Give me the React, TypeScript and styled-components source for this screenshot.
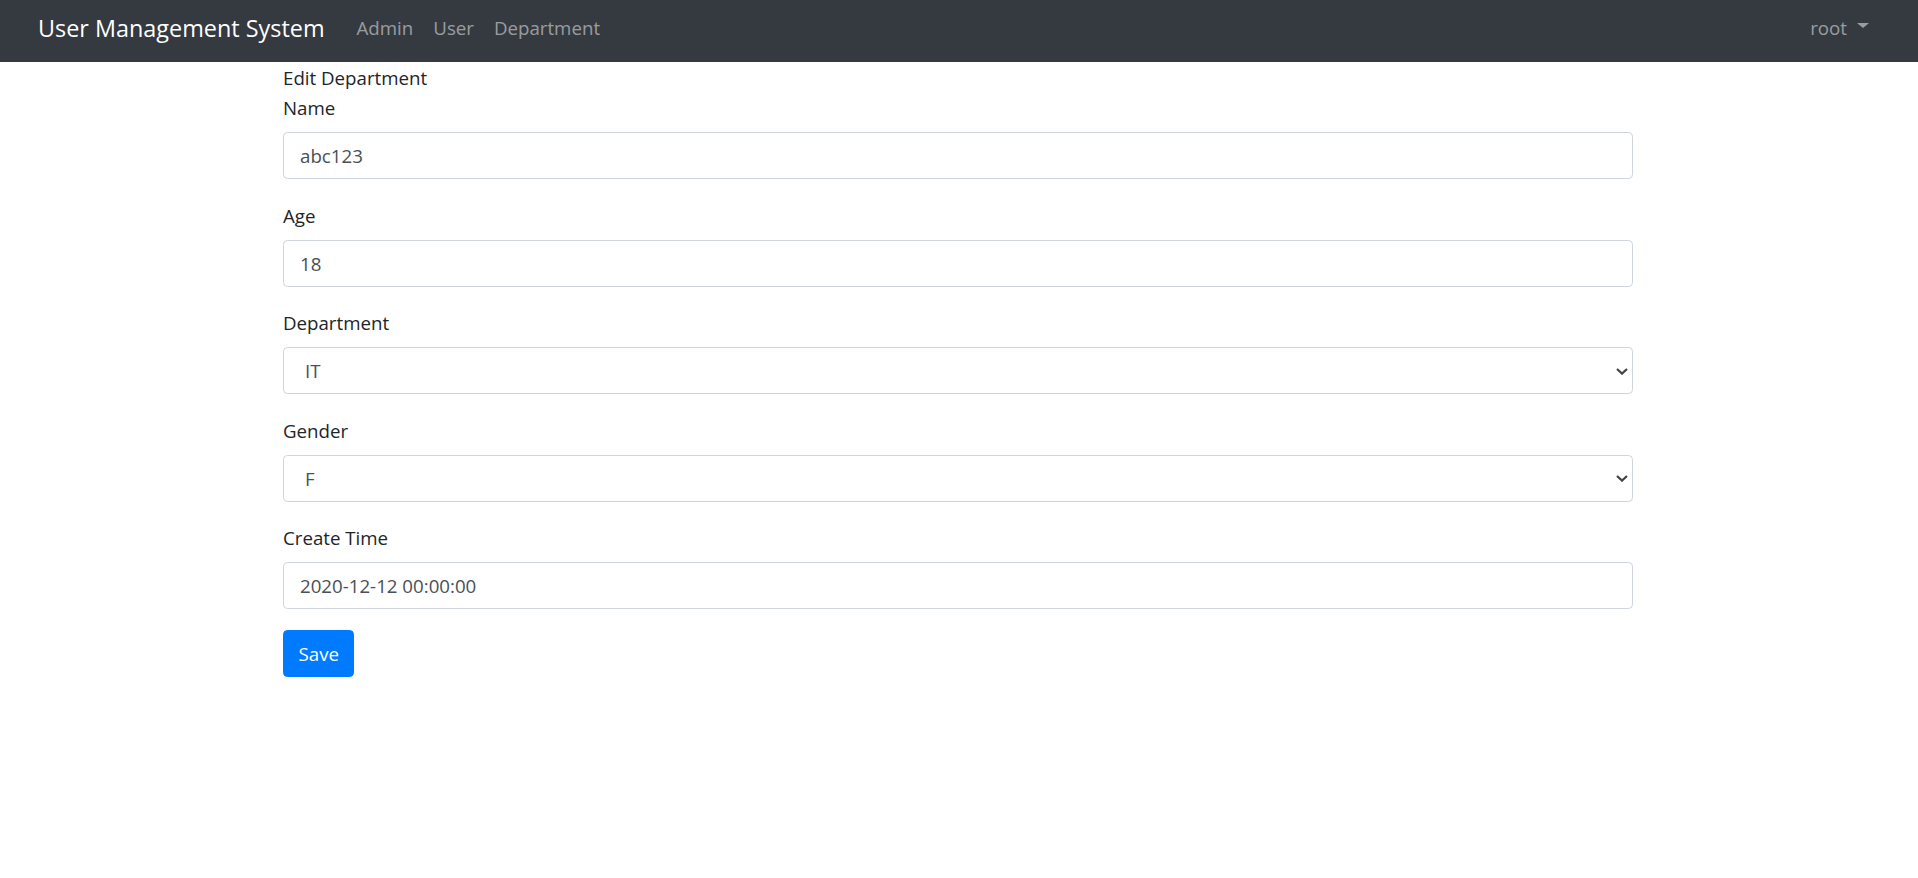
import React from 'react'
import styled, { createGlobalStyle } from 'styled-components'

const GlobalStyle = createGlobalStyle`
    html, body {
        margin: 0;
        padding: 0;
        background: #fff;
    }
    body {
        font-family: 'Segoe UI', 'Open Sans', 'Noto Sans', sans-serif;
        font-size: 18.7px;
        color: #212529;
    }
    * {
        box-sizing: border-box;
    }
`

type Field = {
    label: string
    value: string
    kind: 'input' | 'select'
    options?: string[]
}

const fields: Field[] = [
    { label: 'Name', value: 'abc123', kind: 'input' },
    { label: 'Age', value: '18', kind: 'input' },
    { label: 'Department', value: 'IT', kind: 'select', options: ['IT', 'HR', 'Sales'] },
    { label: 'Gender', value: 'F', kind: 'select', options: ['M', 'F'] },
    { label: 'Create Time', value: '2020-12-12 00:00:00', kind: 'input' },
]

export default function App() {
    return (
        <>
            <GlobalStyle />
            <Navbar>
                <Brand href="#">User Management System</Brand>
                <NavLinks>
                    <NavLink href="#">Admin</NavLink>
                    <NavLink href="#">User</NavLink>
                    <NavLink href="#">Department</NavLink>
                </NavLinks>
                <UserMenu href="#">
                    root
                    <Caret />
                </UserMenu>
            </Navbar>
            <Container>
                <Title>Edit Department</Title>
                <form onSubmit={(e) => e.preventDefault()}>
                    {fields.map((field) => (
                        <FormGroup key={field.label}>
                            <Label>{field.label}</Label>
                            {field.kind === 'input' ? (
                                <Input defaultValue={field.value} />
                            ) : (
                                <SelectWrapper>
                                    <Select defaultValue={field.value}>
                                        {field.options?.map((opt) => (
                                            <option key={opt} value={opt}>
                                                {opt}
                                            </option>
                                        ))}
                                    </Select>
                                    <Chevron width="12" height="7" viewBox="0 0 12 7">
                                        <polyline
                                            points="1,1 6,5.6 11,1"
                                            fill="none"
                                            stroke="#404347"
                                            strokeWidth="2.2"
                                        />
                                    </Chevron>
                                </SelectWrapper>
                            )}
                        </FormGroup>
                    ))}
                    <SaveButton type="submit">Save</SaveButton>
                </form>
            </Container>
        </>
    )
}

const Navbar = styled.nav`
    display: flex;
    align-items: center;
    height: 62px;
    padding: 0 39px 7px 38px;
    background-color: #343a40;
`

const Brand = styled.a`
    font-size: 23.4px;
    line-height: 32px;
    color: #fff;
    text-decoration: none;
    margin-right: 22px;
`

const NavLinks = styled.div`
    display: flex;
    flex: 1;
`

const NavLink = styled.a`
    padding: 0 10px;
    line-height: 28px;
    color: rgba(255, 255, 255, 0.5);
    text-decoration: none;
`

const UserMenu = styled(NavLink)`
    display: flex;
    align-items: center;
`

const Caret = styled.span`
    display: inline-block;
    margin-left: 10px;
    margin-top: -4px;
    border-top: 5.5px solid;
    border-right: 6px solid transparent;
    border-left: 6px solid transparent;
    border-bottom: 0;
`

const Container = styled.main`
    width: 1350px;
    margin: 0 auto;
    padding-top: 2.7px;
    position: relative;
    left: -1px;
`

const Title = styled.div`
    line-height: 26px;
    margin-bottom: 4.3px;
`

const FormGroup = styled.div`
    margin-bottom: 23.6px;
`

const Label = styled.label`
    display: block;
    line-height: 26px;
    margin-bottom: 11px;
`

const controlStyle = `
    display: block;
    width: 100%;
    height: 47px;
    padding: 0 16px;
    font-family: inherit;
    font-size: 18.7px;
    color: #495057;
    background-color: #fff;
    border: 1px solid #ced4da;
    border-radius: 4.4px;
    outline: none;
`

const Input = styled.input`
    ${controlStyle}
`

const SelectWrapper = styled.div`
    position: relative;
`

const Select = styled.select`
    ${controlStyle}
    padding-left: 21px;
    appearance: none;
    -webkit-appearance: none;
`

const Chevron = styled.svg`
    position: absolute;
    right: 5.5px;
    top: 20.5px;
    pointer-events: none;
`

const SaveButton = styled.button`
    display: block;
    height: 47px;
    margin-top: -3px;
    padding: 0 14.5px;
    font-family: inherit;
    font-size: 18.7px;
    color: #fff;
    background-color: #007bff;
    border: 1px solid #007bff;
    border-radius: 4.4px;
    cursor: pointer;
`
